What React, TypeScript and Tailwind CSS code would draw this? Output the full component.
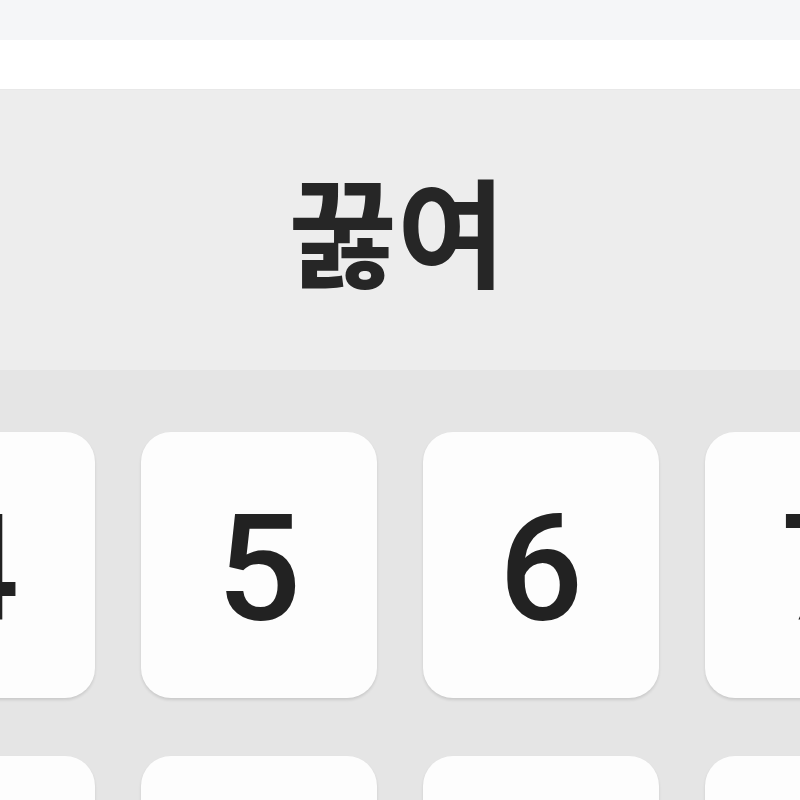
import React from "react";

const Key = ({ label }: { label: string }) => (
  <div className="w-[236px] h-[266px] shrink-0 rounded-[30px] bg-[#fdfdfd] shadow-[0_2px_3px_rgba(0,0,0,0.12)] flex items-center justify-center">
    <span className="text-[148px] leading-none font-medium text-[#222222] pt-[10px] [font-family:Roboto,'Liberation_Sans',sans-serif]">
      {label}
    </span>
  </div>
);

export default function App() {
  return (
    <div className="w-[800px] h-[800px] overflow-hidden flex flex-col bg-[#e5e5e5]">
      <div className="h-[40px] shrink-0 bg-[#f5f6f8]" />
      <div className="h-[50px] shrink-0 bg-white border-b border-[#e8e8e8]" />
      <div className="h-[280px] shrink-0 bg-[#ededed] flex items-center justify-center">
        <span className="text-[118px] leading-none font-semibold text-[#262626] pr-[6px] pb-[4px] [font-family:'Noto_Sans_CJK_KR',sans-serif]">
          꿇여
        </span>
      </div>
      <div className="flex-1 pt-[62px] flex flex-col gap-[58px]">
        <div className="flex gap-[46px] ml-[-141px]">
          <Key label="4" />
          <Key label="5" />
          <Key label="6" />
          <Key label="7" />
        </div>
        <div className="flex gap-[46px] ml-[-141px]">
          <Key label="" />
          <Key label="" />
          <Key label="" />
          <Key label="" />
        </div>
      </div>
    </div>
  );
}
